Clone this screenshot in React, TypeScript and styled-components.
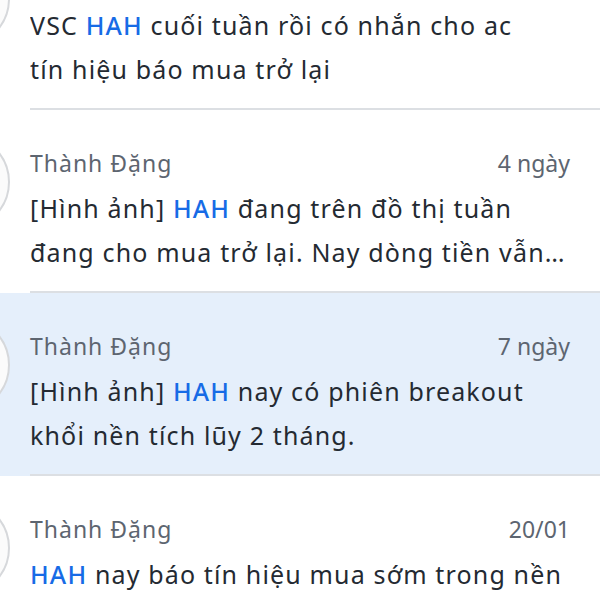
import styled, { createGlobalStyle } from "styled-components";

const GlobalStyle = createGlobalStyle`
    html, body {
        margin: 0;
        padding: 0;
        background: #ffffff;
        overflow: hidden;
    }
    body {
        font-family: "Noto Sans", "Open Sans", sans-serif;
    }
`;

const List = styled.div`
    width: 600px;
    margin-top: -73px;
    display: flex;
    flex-direction: column;
`;

const Item = styled.div<{ $active?: boolean }>`
    display: flex;
    align-items: flex-start;
    background: ${(p) => (p.$active ? "#e5effb" : "#ffffff")};
`;

const Avatar = styled.div`
    flex-shrink: 0;
    width: 92px;
    height: 92px;
    margin-left: -86px;
    margin-top: 24px;
    border-radius: 50%;
    border: 2px solid #d6d8db;
    background: #fbfbfb;
`;

const Body = styled.div`
    flex: 1;
    min-width: 0;
    margin-left: 20px;
    padding: 37px 30px 17px 0;
    border-bottom: 2px solid #dcdfe3;
`;

const Header = styled.div`
    display: flex;
    justify-content: space-between;
    align-items: baseline;
    height: 32px;
    line-height: 32px;
    font-size: 23px;
    color: #5d6570;
`;

const Name = styled.span`
    letter-spacing: 1px;
`;

const Time = styled.span`
    color: #5d6570;
`;

const Message = styled.div`
    margin-top: 7px;
    font-size: 25px;
    line-height: 44px;
    letter-spacing: 1.15px;
    color: #242a32;
    white-space: pre-line;
    display: -webkit-box;
    -webkit-line-clamp: 2;
    -webkit-box-orient: vertical;
    overflow: hidden;
    text-overflow: ellipsis;
`;

const Keyword = styled.span`
    color: #176be6;
    font-weight: 500;
`;

type Row = {
    name: string;
    time: string;
    before: string;
    after: string;
    active?: boolean;
};

const rows: Row[] = [
    { name: "Thành Đặng", time: "1 tuần", before: "VSC ", after: " cuối tuần rồi có nhắn cho ac\ntín hiệu báo mua trở lại" },
    { name: "Thành Đặng", time: "4 ngày", before: "[Hình ảnh] ", after: " đang trên đồ thị tuần đang cho mua trở lại. Nay dòng tiền vẫn vào đều, chờ xác nhận thêm" },
    { name: "Thành Đặng", time: "7 ngày", before: "[Hình ảnh] ", after: " nay có phiên breakout khổi nền tích lũy 2 tháng.", active: true },
    { name: "Thành Đặng", time: "20/01", before: "", after: " nay báo tín hiệu mua sớm trong nền tích lũy" },
];

export default function App() {
    return (
        <>
            <GlobalStyle />
            <List>
                {rows.map((row, i) => (
                    <Item key={i} $active={row.active}>
                        <Avatar />
                        <Body>
                            <Header>
                                <Name>{row.name}</Name>
                                <Time>{row.time}</Time>
                            </Header>
                            <Message>
                                {row.before}
                                <Keyword>HAH</Keyword>
                                {row.after}
                            </Message>
                        </Body>
                    </Item>
                ))}
            </List>
        </>
    );
}
